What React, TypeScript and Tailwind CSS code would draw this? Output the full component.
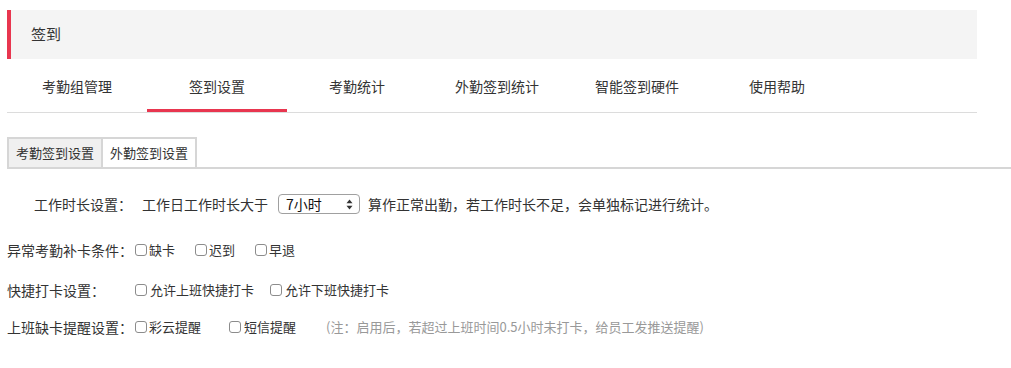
import React, { useState } from 'react';

const font = { fontFamily: '"Noto Sans CJK SC", "Noto Sans", sans-serif' };

const tabs = ['考勤组管理', '签到设置', '考勤统计', '外勤签到统计', '智能签到硬件', '使用帮助'];

const Check = ({ label, className = '', textClass = 'ml-[2px]' }: { label: string; className?: string; textClass?: string }) => (
  <label className={`flex items-center text-[13px] ${className}`}>
    <span className="w-[12px] h-[12px] border border-[#8c8c8c] rounded-[3px] bg-white shrink-0" />
    <span className={textClass}>{label}</span>
  </label>
);

const App = () => {
  const [active, setActive] = useState(1);
  const [sub, setSub] = useState(0);

  return (
    <div className="w-[1011px] h-[368px] bg-white text-[#333] overflow-hidden" style={font}>
      {/* page title */}
      <div className="ml-[7px] mt-[10px] w-[970px] h-[49px] bg-[#f4f4f4] border-l-4 border-[#e8364f] flex items-center pl-[20px] text-[15px]">
        签到
      </div>

      {/* main tabs */}
      <div className="ml-[7px] w-[970px] h-[54px] flex border-b border-[#dcdcdc]">
        {tabs.map((t, i) => (
          <button
            key={t}
            onClick={() => setActive(i)}
            className={`relative w-[140px] h-full flex items-center justify-center text-[14px] text-[#333] pt-[2px] ${
              active === i ? 'after:absolute after:left-0 after:right-0 after:bottom-[0px] after:h-[3px] after:bg-[#e8364f]' : ''
            }`}
          >
            {t}
          </button>
        ))}
      </div>

      {/* sub tabs */}
      <div className="mt-[24px] ml-[7px] flex border-b-2 border-[#d6d6d6] text-[13px]">
        {['考勤签到设置', '外勤签到设置'].map((t, i) => (
          <button
            key={t}
            onClick={() => setSub(i)}
            className={`h-[30px] px-[7px] border-t-2 border-l-2 border-[#d6d6d6] ${i === 1 ? 'border-r-2' : ''} ${
              sub === i ? 'bg-[#f0f0f0]' : 'bg-white'
            }`}
          >
            {t}
          </button>
        ))}
      </div>

      <div className="text-[14px]">
        {/* work length */}
        <div className="mt-[25px] h-[20px] flex items-center pl-[34px]">
          <span>工作时长设置：</span>
          <span className="ml-[10px]">工作日工作时长大于</span>
          <div className="ml-[10px] w-[82px] h-[20px] border border-[#a0a0a0] rounded-[4px] flex items-center justify-between pl-[7px] pr-[6px] bg-white">
            <span className="text-[14px] text-[#111]">7小时</span>
            <svg width="7" height="11" viewBox="0 0 7 11">
              <path d="M3.5 0.5 L6.5 4.2 H0.5 Z" fill="#333" />
              <path d="M3.5 10.5 L6.5 6.8 H0.5 Z" fill="#333" />
            </svg>
          </div>
          <span className="ml-[8px]">算作正常出勤，若工作时长不足，会单独标记进行统计。</span>
        </div>

        {/* abnormal */}
        <div className="mt-[26px] h-[20px] flex items-center pl-[7px]">
          <span className="w-[128px]">异常考勤补卡条件：</span>
          <Check label="缺卡" />
          <Check label="迟到" className="ml-[20px]" />
          <Check label="早退" className="ml-[20px]" />
        </div>

        {/* quick punch */}
        <div className="mt-[20px] h-[20px] flex items-center pl-[7px]">
          <span className="w-[128px]">快捷打卡设置：</span>
          <Check label="允许上班快捷打卡" textClass="ml-[3px]" />
          <Check label="允许下班快捷打卡" className="ml-[16px]" textClass="ml-[3px]" />
        </div>

        {/* reminder */}
        <div className="mt-[17px] h-[20px] flex items-center pl-[7px]">
          <span className="w-[128px]">上班缺卡提醒设置：</span>
          <Check label="彩云提醒" />
          <Check label="短信提醒" className="ml-[28px]" textClass="ml-[3px]" />
          <span className="ml-[30px] text-[13px] text-[#999]">(注：启用后，若超过上班时间0.5小时未打卡，给员工发推送提醒)</span>
        </div>
      </div>
    </div>
  );
};

export default App;
